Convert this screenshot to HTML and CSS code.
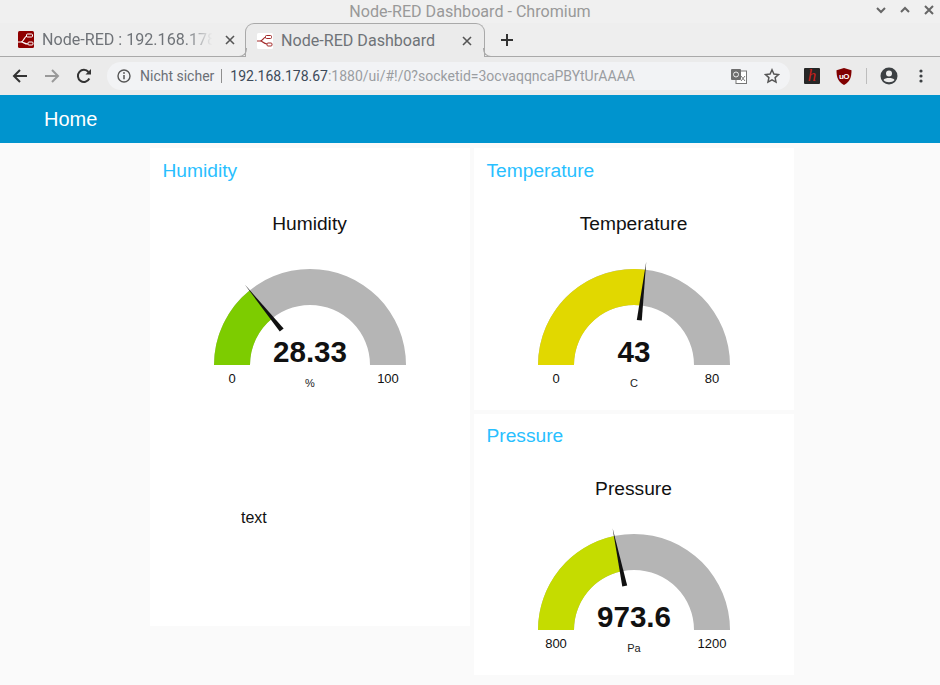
FILE: index.html
```html
<!DOCTYPE html>
<html lang="en">
<head>
  <meta charset="UTF-8">
  <meta name="viewport" content="width=device-width, initial-scale=1.0">
  <title>Node-RED Dashboard</title>
  <link rel="stylesheet" href="styles.css">
</head>
<body>
  <!-- browser window chrome -->
  <div class="titlebar">
    <span class="window-title">Node-RED Dashboard - Chromium</span>
    <div class="window-controls">
      <svg width="24" height="18" viewBox="0 0 24 18"><path d="M8 7l4 4 4-4" /></svg>
      <svg width="24" height="18" viewBox="0 0 24 18"><path d="M8 11l4-4 4 4" /></svg>
      <svg width="24" height="18" viewBox="0 0 24 18"><path d="M8 5l8 8M16 5l-8 8" /></svg>
    </div>
  </div>

  <div class="tabstrip">
    <div class="tab">
      <svg class="favicon" width="16" height="17" viewBox="0 0 16 17">
        <rect width="16" height="17" rx="1.5" fill="#8f0000" />
        <path d="M0 11h3c3 0 3-5.500 6-6M3 11c3 0 3 2 7 2" fill="none" stroke="#fff" stroke-width="1.200" />
        <rect x="8.500" y="3" width="6" height="3" rx="1" fill="none" stroke="#fff" />
        <rect x="10" y="11" width="5" height="3" rx="1" fill="none" stroke="#fff" />
      </svg>
      <span class="tab-label tab-label-faded">Node-RED : 192.168.178.</span>
      <svg class="tab-close" width="10" height="10" viewBox="0 0 10 10"><path d="M1 1l8 8M9 1l-8 8" /></svg>
    </div>
    <div class="tab tab-active">
      <svg class="favicon" width="16" height="16" viewBox="0 0 16 16">
        <rect width="16" height="16" rx="1.500" fill="#fff" />
        <path d="M0 8h3c3 0 3-3.500 6-4M3 8c3 0 3 2.500 7 3" fill="none" stroke="#a32a2a" stroke-width="1.200" />
        <rect x="8.500" y="2.500" width="6" height="3" rx="1" fill="none" stroke="#a32a2a" />
        <rect x="10" y="10" width="5" height="3" rx="1" fill="none" stroke="#a32a2a" />
      </svg>
      <span class="tab-label">Node-RED Dashboard</span>
      <svg class="tab-close" width="10" height="10" viewBox="0 0 10 10"><path d="M1 1l8 8M9 1l-8 8" /></svg>
    </div>
    <svg class="new-tab" width="14" height="14" viewBox="0 0 14 14"><path d="M7 1v12M1 7h12" /></svg>
  </div>

  <div class="toolbar">
    <button class="tool-btn">
      <svg width="16" height="16" viewBox="0 0 16 16"><path class="stroke-dark" d="M15 8H2M8 2L2 8l6 6" /></svg>
    </button>
    <button class="tool-btn">
      <svg width="16" height="16" viewBox="0 0 16 16"><path class="stroke-muted" d="M1 8h13M8 2l6 6-6 6" /></svg>
    </button>
    <button class="tool-btn">
      <svg width="16" height="16" viewBox="0 0 16 16">
        <path class="stroke-dark" d="M13.300 10.500A6 6 0 1 1 12.500 4" />
        <path d="M9.500 6.500H15V1z" fill="#333" />
      </svg>
    </button>
    <div class="omnibox">
      <svg width="14" height="14" viewBox="0 0 14 14">
        <circle cx="7" cy="7" r="6" fill="none" stroke="#555" stroke-width="1.400" />
        <path d="M7 6v4.300" stroke="#555" stroke-width="1.500" />
        <circle cx="7" cy="4" r="0.900" fill="#555" />
      </svg>
      <span class="security">Nicht sicher</span>
      <span class="url"><span class="url-host">192.168.178.67</span>:1880/ui/#!/0?socketid=3ocvaqqncaPBYtUrAAAA</span>
      <div class="omnibox-actions">
        <svg width="16" height="15" viewBox="0 0 16 15">
          <rect x="5" y="2" width="10.500" height="12.500" fill="#fff" stroke="#777" />
          <rect width="10" height="11" rx="1" fill="#6e6e6e" />
          <circle cx="5" cy="5.500" r="2.500" fill="none" stroke="#eee" />
          <path d="M10 7l4 5M14 7l-4 5" stroke="#777" />
        </svg>
        <svg width="16" height="16" viewBox="0 0 16 16">
          <path d="M8 1.800l1.900 4.200 4.600.5-3.400 3.100.9 4.500L8 11.800l-4 2.300.9-4.500-3.400-3.100 4.600-.5z" fill="none" stroke="#555" stroke-width="1.500" />
        </svg>
      </div>
    </div>
    <button class="tool-btn"><span class="ext-hypothesis">h</span></button>
    <button class="tool-btn">
      <svg width="16" height="17" viewBox="0 0 16 17">
        <path d="M8 0l7.500 2.200c0 7-1.500 11.500-7.500 14.800C2 13.700.5 9.200.5 2.200z" fill="#800000" />
        <text x="8" y="10.500" class="ext-ublock">uO</text>
      </svg>
    </button>
    <div class="toolbar-divider"></div>
    <button class="tool-btn">
      <svg width="18" height="18" viewBox="0 0 18 18">
        <circle cx="9" cy="9" r="8.500" fill="#3c4043" />
        <circle cx="9" cy="6.500" r="3" fill="#ececec" />
        <path d="M3.500 13c1.500-2.600 9.500-2.600 11 0-2.500 3-8.500 3-11 0z" fill="#ececec" />
      </svg>
    </button>
    <button class="tool-btn">
      <svg width="4" height="14" viewBox="0 0 4 14">
        <circle cx="2" cy="2" r="1.600" fill="#3c4043" />
        <circle cx="2" cy="7" r="1.600" fill="#3c4043" />
        <circle cx="2" cy="12" r="1.600" fill="#3c4043" />
      </svg>
    </button>
  </div>

  <!-- dashboard page -->
  <header class="app-header">Home</header>

  <main class="dashboard">
    <div class="column">
      <section class="card card-tall">
        <h2 class="card-title">Humidity</h2>
        <svg class="gauge" width="320" height="205" viewBox="0 0 320 205">
          <text class="gauge-title" x="159.500" y="38">Humidity</text>
          <g transform="translate(160 173)">
            <path class="gauge-track" d="M-96 0A96 96 0 0 1 96 0H60A60 60 0 0 0 -60 0Z" />
            <path class="fill-green" d="M-96 0A96 96 0 0 1 -60.400 -74.600L-37.800 -46.600A60 60 0 0 0 -60 0Z" />
            <polygon class="needle" points="-45,-2.500 -104,0 -45,2.500" transform="rotate(51)" />
            <text class="gauge-value" y="-3">28.33</text>
            <text class="gauge-label" x="-78" y="18">0</text>
            <text class="gauge-label" x="78" y="18">100</text>
            <text class="gauge-unit" y="22">%</text>
          </g>
        </svg>
        <p class="text-widget">text</p>
      </section>
    </div>
    <div class="column">
      <section class="card">
        <h2 class="card-title">Temperature</h2>
        <svg class="gauge" width="320" height="205" viewBox="0 0 320 205">
          <text class="gauge-title" x="159.500" y="38">Temperature</text>
          <g transform="translate(160 173)">
            <path class="gauge-track" d="M-96 0A96 96 0 0 1 96 0H60A60 60 0 0 0 -60 0Z" />
            <path class="fill-yellow" d="M-96 0A96 96 0 0 1 11.300 -95.300L7.050 -59.600A60 60 0 0 0 -60 0Z" />
            <polygon class="needle" points="-45,-2.500 -104,0 -45,2.500" transform="rotate(96.750)" />
            <text class="gauge-value" y="-3">43</text>
            <text class="gauge-label" x="-78" y="18">0</text>
            <text class="gauge-label" x="78" y="18">80</text>
            <text class="gauge-unit" y="22">C</text>
          </g>
        </svg>
      </section>
      <section class="card">
        <h2 class="card-title">Pressure</h2>
        <svg class="gauge" width="320" height="205" viewBox="0 0 320 205">
          <text class="gauge-title" x="159.500" y="38">Pressure</text>
          <g transform="translate(160 173)">
            <path class="gauge-track" d="M-96 0A96 96 0 0 1 96 0H60A60 60 0 0 0 -60 0Z" />
            <path class="fill-lime" d="M-96 0A96 96 0 0 1 -19.800 -93.900L-12.400 -58.700A60 60 0 0 0 -60 0Z" />
            <polygon class="needle" points="-45,-2.500 -104,0 -45,2.500" transform="rotate(78.120)" />
            <text class="gauge-value" y="-3">973.6</text>
            <text class="gauge-label" x="-78" y="18">800</text>
            <text class="gauge-label" x="78" y="18">1200</text>
            <text class="gauge-unit" y="22">Pa</text>
          </g>
        </svg>
      </section>
    </div>
  </main>
</body>
</html>
```

FILE: styles.css
```css
* {
  box-sizing: border-box;
}

html,
body {
  height: 100%;
}

body {
  margin: 0;
  display: flex;
  flex-direction: column;
  overflow: hidden;
  font-family: "Liberation Sans", Arial, sans-serif;
  background-color: #fafafa;
}

/* window title */
.titlebar {
  position: relative;
  height: 23px;
  flex: none;
  display: flex;
  align-items: center;
  justify-content: center;
  background-color: #f0f0f0;
  font-family: Roboto, sans-serif;
  font-size: 16.1px;
  color: #999;
}

.window-controls {
  position: absolute;
  top: 1px;
  right: -1px;
  display: flex;
  align-items: center;
}

.window-controls svg path {
  fill: none;
  stroke: #666;
  stroke-width: 2;
}

/* tabs */
.tabstrip {
  height: 34px;
  flex: none;
  display: flex;
  align-items: stretch;
  background-color: #eeeeee;
  border-bottom: 1px solid #a9a9a9;
  font-family: Roboto, sans-serif;
  font-size: 16.1px;
  color: #6f7378;
}

.tab {
  width: 245px;
  display: flex;
  align-items: center;
  padding-left: 18px;
}

.favicon {
  flex: none;
}

.tab-label {
  width: 174px;
  margin-left: 8px;
  white-space: nowrap;
}

.tab-label-faded {
  -webkit-mask-image: linear-gradient(to right, #000 82%, transparent 98%);
  mask-image: linear-gradient(to right, #000 82%, transparent 98%);
}

.tab-close {
  margin-left: 9px;
  flex: none;
}

.tab-close path {
  fill: none;
  stroke: #555;
  stroke-width: 1.6;
}

.tab-active {
  position: relative;
  width: 240px;
  margin-bottom: -1px;
  padding-left: 11px;
  background-color: #ebebeb;
  border: 1px solid #a9a9a9;
  border-bottom: none;
  border-radius: 9px 9px 0 0;
}

.tab-active .tab-label {
  width: 177px;
}

.tab-active .tab-close {
  margin-left: 4px;
}

.tab-active::before,
.tab-active::after {
  content: "";
  position: absolute;
  bottom: 0;
  width: 8px;
  height: 8px;
  border-bottom: 1px solid #a9a9a9;
}

.tab-active::before {
  left: -8px;
  border-right: 1px solid #a9a9a9;
  border-bottom-right-radius: 8px;
}

.tab-active::after {
  right: -8px;
  border-left: 1px solid #a9a9a9;
  border-bottom-left-radius: 8px;
}

.new-tab {
  align-self: center;
  margin-left: 15px;
}

.new-tab path {
  fill: none;
  stroke: #333;
  stroke-width: 2;
}

/* address bar row */
.toolbar {
  height: 38px;
  flex: none;
  display: flex;
  align-items: center;
  padding-left: 4px;
  background-color: #ebebeb;
}

.tool-btn {
  width: 32px;
  height: 32px;
  flex: none;
  display: flex;
  align-items: center;
  justify-content: center;
  padding: 0;
  background: none;
  border: none;
}

.stroke-dark,
.stroke-muted {
  fill: none;
  stroke-width: 2;
}

.stroke-dark {
  stroke: #333;
}

.stroke-muted {
  stroke: #999;
}

.omnibox {
  width: 683px;
  height: 28px;
  margin: 0 6px 0 7px;
  display: flex;
  align-items: center;
  padding-left: 10px;
  background-color: #f2f3f5;
  border-radius: 14px;
  font-family: Roboto, sans-serif;
  font-size: 14px;
  white-space: nowrap;
}

.security {
  margin-left: 9px;
  padding-right: 7px;
  color: #6b6f75;
  border-right: 1px solid #8f8f8f;
  line-height: 14px;
}

.url {
  margin-left: 8px;
  color: #9a9da1;
}

.url-host {
  color: #3c4a5a;
}

.omnibox-actions {
  display: flex;
  align-items: center;
  gap: 17px;
  margin-left: auto;
  padding-right: 10px;
}

.ext-hypothesis {
  width: 16px;
  height: 16px;
  display: block;
  background-color: #262626;
  border-radius: 1px;
  font-family: "Liberation Serif", serif;
  font-style: italic;
  font-size: 17px;
  line-height: 15px;
  text-align: center;
  color: #c8201c;
}

.ext-ublock {
  font-family: "Liberation Sans", sans-serif;
  font-size: 8px;
  font-weight: bold;
  letter-spacing: -0.5px;
  text-anchor: middle;
  fill: #fff;
}

.toolbar-divider {
  width: 1px;
  height: 16px;
  margin: 0 6px;
  flex: none;
  background-color: #bdbdbd;
}

/* dashboard */
.app-header {
  height: 48px;
  flex: none;
  display: flex;
  align-items: center;
  padding-left: 44px;
  background-color: #0094ce;
  font-size: 20px;
  color: #fff;
}

.dashboard {
  flex: 1;
  display: flex;
  gap: 4px;
  padding: 5px 0 0 150px;
}

.column {
  width: 320px;
  display: flex;
  flex-direction: column;
  gap: 4px;
}

.card {
  height: 262px;
  background-color: #fff;
}

.card + .card {
  height: 261px;
}

.card + .card .card-title {
  height: 43px;
  padding-top: 11px;
}

.card-tall {
  height: 478px;
}

.card-title {
  height: 44px;
  margin: 0;
  padding: 12px 0 0 12.5px;
  font-size: 19.2px;
  font-weight: normal;
  line-height: 22px;
  color: #29bfff;
}

.gauge {
  display: block;
}

.gauge-title {
  font-size: 19.2px;
  text-anchor: middle;
  fill: #111;
}

.gauge-track,
.fill-green,
.fill-yellow,
.fill-lime {
  filter: blur(0.35px);
}

.gauge-track {
  fill: #b5b5b5;
}

.fill-green {
  fill: #7dcc00;
}

.fill-yellow {
  fill: #e1d800;
}

.fill-lime {
  fill: #c5dc00;
}

.needle {
  fill: #111;
}

.gauge-value {
  font-size: 29.6px;
  font-weight: bold;
  text-anchor: middle;
  fill: #111;
}

.gauge-label {
  font-size: 13px;
  text-anchor: middle;
  fill: #111;
}

.gauge-unit {
  font-size: 11px;
  text-anchor: middle;
  fill: #222;
}

.text-widget {
  margin: 0;
  padding: 112px 0 0 91px;
  font-size: 16px;
  line-height: 18px;
  color: #111;
}
```
